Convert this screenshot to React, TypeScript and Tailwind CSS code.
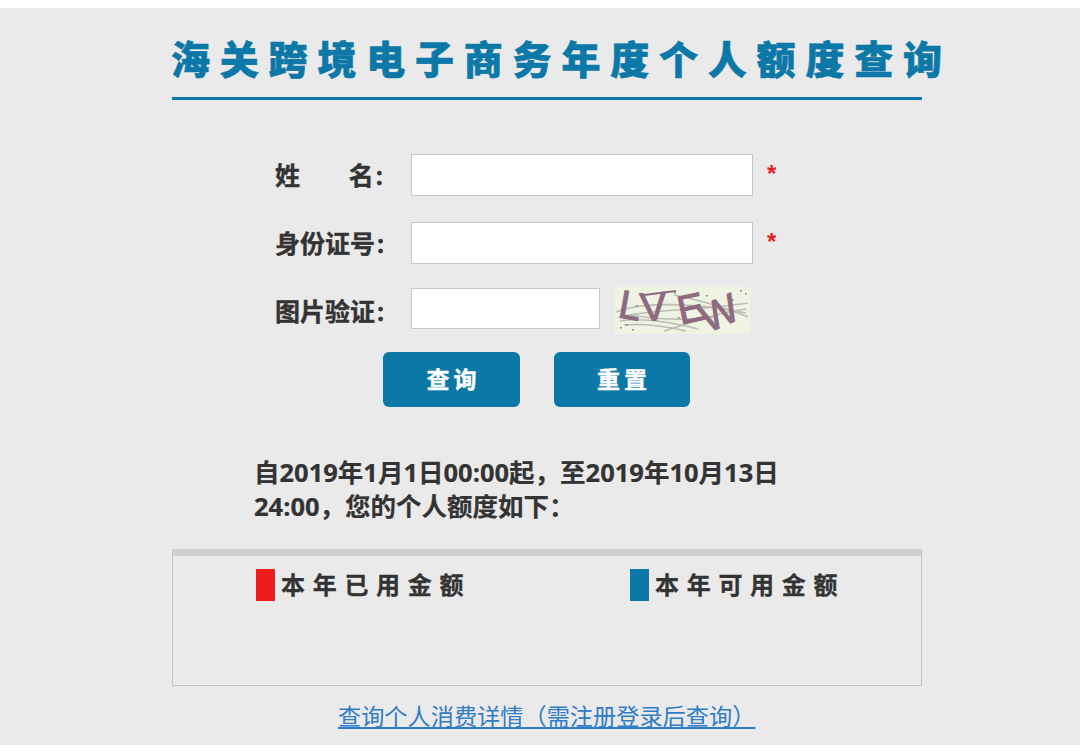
const FONT = "font-['Open_Sans','Noto_Sans_CJK_SC',sans-serif]";

const Captcha = () => (
  <svg width="136" height="47" viewBox="0 0 136 47" className="ml-[14px] mt-[-1px] shrink-0">
    <rect x="0" y="0" width="136" height="47" fill="#eef3e2" />
    <g fill="none" stroke="#bcbdb7" strokeWidth="1.6">
      <path d="M2 25 C30 14 80 16 132 26" />
      <path d="M4 30 C40 22 80 24 134 16" />
      <path d="M6 34 C30 30 60 36 84 42" />
      <path d="M10 38 C30 36 56 40 72 44" />
      <path d="M50 44 C70 38 100 26 132 22" />
      <path d="M16 28 C40 32 70 34 100 30" />
      <path d="M60 8 C80 12 110 20 134 30" />
    </g>
    <g fill="#8e6a80" stroke="#8e6a80" strokeWidth="1" fontFamily="'Liberation Sans', sans-serif" fontSize="40">
      <text x="5" y="32" transform="rotate(10 16 20)">L</text>
      <text x="26" y="33" transform="rotate(-4 44 20)">V</text>
      <text x="63" y="35" transform="rotate(-12 76 20)">E</text>
      <text x="84" y="38" transform="rotate(-24 108 20)">W</text>
    </g>
    <path d="M30 8 L62 4" fill="none" stroke="#8e6a80" strokeWidth="2" />
    <g fill="#6f7a70">
      <rect x="6" y="40" width="1.5" height="1.5" />
      <rect x="12" y="37" width="1.5" height="1.5" />
      <rect x="18" y="42" width="1.5" height="1.5" />
      <rect x="22" y="18" width="1.5" height="1.5" />
      <rect x="60" y="5" width="1.5" height="1.5" />
      <rect x="64" y="30" width="1.5" height="1.5" />
      <rect x="92" y="8" width="1.5" height="1.5" />
      <rect x="126" y="3" width="1.5" height="1.5" />
      <rect x="131" y="6" width="1.5" height="1.5" />
      <rect x="118" y="12" width="1.5" height="1.5" />
    </g>
  </svg>
);

const Field = ({ label, inputClass, labelClass, star }: { label: React.ReactNode; inputClass: string; labelClass: string; star?: boolean }) => (
  <div className="flex items-start">
    <div className={`w-[136px] h-[42px] flex items-center justify-between pr-[28px] text-[25px] leading-none font-bold text-[#333333] [-webkit-text-stroke:0.4px_#333333] ${labelClass}`}>
      {label}
    </div>
    <input className={`bg-white border border-[#c8c8c8] ${inputClass}`} />
    {star && <span className="ml-[14px] pt-[2px] text-[24px] leading-[36px] font-bold text-[#e8201c] font-['Liberation_Sans']">*</span>}
  </div>
);

export default function App() {
  return (
    <div className={`${FONT} h-[756px] bg-white pt-[8px] overflow-hidden`}>
      <div className="h-[737px] bg-[#eaeaea] pl-[172px] pt-[24px]">
        <div className="w-[750px]">
          <h1 className="-ml-[1px] whitespace-nowrap text-[39px] leading-[54px] font-black tracking-[9.8px] text-[#0c78a8] [-webkit-text-stroke:0.6px_#0c78a8]">
            海关跨境电子商务年度个人额度查询
          </h1>
          <div className="h-[3px] mt-[11px] bg-[#0c78a8]" />

          <div className="ml-[103px] mt-[54px] flex flex-col">
            <Field
              inputClass="w-[342px] h-[42px]"
              labelClass="pt-[0px]"
              star
              label={
                <>
                  <span>姓</span>
                  <span className="whitespace-nowrap">名<span className="ml-[2px]">:</span></span>
                </>
              }
            />
            <div className="h-[26px]" />
            <Field
              inputClass="w-[342px] h-[42px]"
              labelClass="pt-[0px]"
              star
              label={<span className="whitespace-nowrap">身份证号<span className="ml-[2px]">:</span></span>}
            />
            <div className="h-[24px]" />
            <div className="flex items-start">
              <Field
                inputClass="w-[189px] h-[41px]"
                labelClass="pt-[4px]"
                label={<span className="whitespace-nowrap">图片验证<span className="ml-[2px]">:</span></span>}
              />
              <Captcha />
            </div>
          </div>

          <div className="ml-[211px] mt-[18px] flex gap-[34px]">
            <button className="w-[137px] h-[55px] pl-[4px] rounded-[6px] bg-[#0c78a8] text-white text-[23px] font-bold tracking-[4px] [-webkit-text-stroke:0.4px_#ffffff]">查询</button>
            <button className="w-[136px] h-[55px] pl-[4px] rounded-[6px] bg-[#0c78a8] text-white text-[23px] font-bold tracking-[4px] [-webkit-text-stroke:0.4px_#ffffff]">重置</button>
          </div>

          <p className="ml-[82px] mt-[48px] w-[560px] whitespace-nowrap text-[25.5px] leading-[34px] font-bold text-[#333333] [-webkit-text-stroke:0.2px_#333333]">
            自2019年1月1日00:00起，至2019年10月13日
            <br />
            24:00，您的个人额度如下：
          </p>

          <div className="mt-[26px] h-[137px] border border-[#c4c4c4] border-t-[7px] border-t-[#cfcfcf] flex pl-[83px] pt-[13px]">
            <div className="w-[374px] flex items-start">
              <span className="w-[19px] h-[32px] bg-[#ee1c1c]" />
              <span className="ml-[6px] text-[24px] leading-[32px] font-bold tracking-[7.7px] text-[#333333] [-webkit-text-stroke:0.3px_#333333]">本年已用金额</span>
            </div>
            <div className="flex items-start">
              <span className="w-[19px] h-[32px] bg-[#0c78a8]" />
              <span className="ml-[6px] text-[24px] leading-[32px] font-bold tracking-[7.7px] text-[#333333] [-webkit-text-stroke:0.3px_#333333]">本年可用金额</span>
            </div>
          </div>

          <div className="mt-[13px] pl-[166px]">
            <a href="#" className="whitespace-nowrap text-[23.2px] leading-[34px] text-[#2f7cc8] underline">
              查询个人消费详情（需注册登录后查询）
            </a>
          </div>
        </div>
      </div>
    </div>
  );
}
